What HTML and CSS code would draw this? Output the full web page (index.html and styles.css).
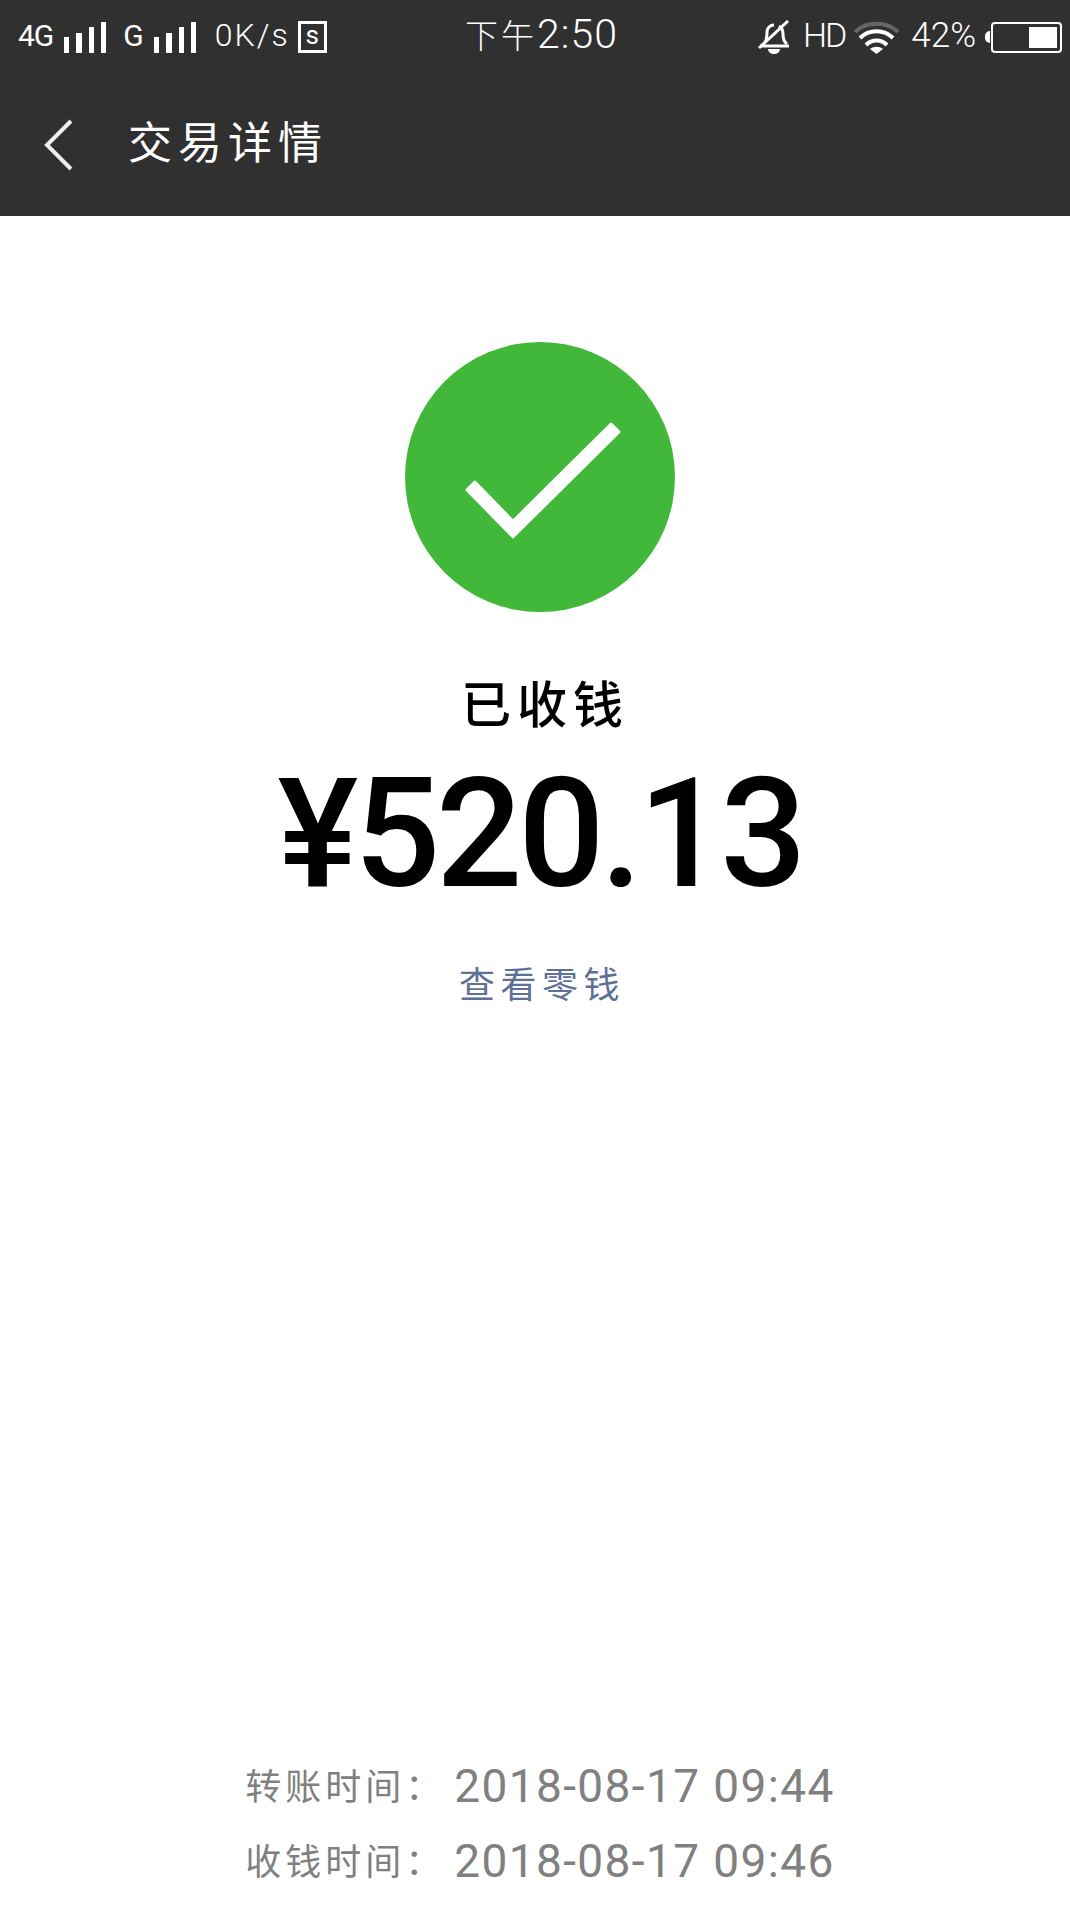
FILE: index.html
```html
<!DOCTYPE html>
<html lang="zh-CN">
<head>
    <meta charset="UTF-8">
    <meta name="viewport" content="width=device-width, initial-scale=1.0">
    <title>交易详情</title>
    <link rel="stylesheet" href="styles.css">
</head>
<body>
    <div class="page">
        <header class="header">
            <div class="status-bar">
                <div class="status-left">
                    <span class="net">4G</span>
                    <svg class="signal" viewBox="0 0 42 31"><path d="M0 15h5v16H0zM12 11h6v20h-6zM25 5h5v26h-5zM37 0h5v31h-5z" fill="#fff"/></svg>
                    <span class="net net-g">G</span>
                    <svg class="signal" viewBox="0 0 42 31"><path d="M0 15h5v16H0zM12 11h6v20h-6zM25 5h5v26h-5zM37 0h5v31h-5z" fill="#fff"/></svg>
                    <span class="speed">0K/s</span>
                    <span class="sim">s</span>
                </div>
                <div class="clock"><span class="clock-cn">下午</span>2:50</div>
                <div class="status-right">
                    <svg class="bell" viewBox="0 0 33 34" fill="none" stroke="#fff">
                        <path d="M7 22c2-3 2-6 2-10 0-4 3-7 7-7M21 6c3 2 4 5 4 8 0 4 1 8 4 10" stroke-width="3"/>
                        <path d="M2 26h29" stroke-width="3"/>
                        <path d="M10 29h12c0 3-3 5-6 5s-6-2-6-5z" fill="#fff" stroke="none"/>
                        <path d="M1 28L30 1" stroke-width="3"/>
                    </svg>
                    <span class="hd">HD</span>
                    <svg class="wifi" viewBox="0 0 45 33" fill="none" stroke-width="4">
                        <path d="M1 11C12 0 33 0 44 11" stroke="#666"/>
                        <path d="M6 17C15 8 30 8 39 17" stroke="#fff"/>
                        <path d="M12 24C18 18 27 18 33 24" stroke="#fff"/>
                        <path d="M16 28c4-3 9-3 13 0l-6.500 5z" fill="#fff" stroke="none"/>
                    </svg>
                    <span class="percent">42%</span>
                    <div class="battery-nub"></div>
                    <div class="battery"><div class="battery-fill"></div></div>
                </div>
            </div>
            <div class="title-bar">
                <svg class="back" viewBox="0 0 30 52" fill="none"><path d="M27 2L3 26l24 24" stroke="#eee" stroke-width="4"/></svg>
                <h1 class="title">交易详情</h1>
            </div>
        </header>
        <main class="content">
            <svg class="success" viewBox="0 0 270 270">
                <circle cx="135" cy="135" r="135" fill="#41b83a"/>
                <path d="M69.900 140.100L108 179.200l98.100-97.100 7.800 7.800L108 194.800 62.100 147.900z" fill="#fff" stroke="#fff" stroke-width="3" stroke-linejoin="round"/>
            </svg>
            <div class="state">已收钱</div>
            <div class="amount">¥520.13</div>
            <a class="link">查看零钱</a>
            <div class="times">
                <div class="time-row"><span class="time-label">转账时间：</span><span class="time-value">2018-08-17 09:44</span></div>
                <div class="time-row"><span class="time-label">收钱时间：</span><span class="time-value">2018-08-17 09:46</span></div>
            </div>
        </main>
    </div>
</body>
</html>
```

FILE: styles.css
```css
* {
    margin: 0;
    padding: 0;
    box-sizing: border-box;
}
body {
    background-color: #fff;
    font-family: Roboto, "Noto Sans CJK SC", sans-serif;
}
.page {
    display: flex;
    flex-direction: column;
    height: 1911px;
    overflow: hidden;
}
.header {
    height: 216px;
    background-color: #303030;
    color: #fff;
}
.status-bar {
    display: grid;
    grid-template-columns: 1fr auto 1fr;
    align-items: center;
    height: 74px;
    padding: 0 8px 0 18px;
}
.status-left,
.status-right {
    display: flex;
    align-items: center;
}
.status-right {
    justify-content: flex-end;
}
.net {
    margin-bottom: 4px;
    font-size: 30px;
    letter-spacing: -1px;
}
.net-g {
    margin-left: 17px;
}
.signal {
    width: 42px;
    height: 31px;
    margin-left: 11px;
}
.speed {
    margin-left: 19px;
    margin-bottom: 4px;
    font-size: 32px;
    font-weight: 300;
    letter-spacing: 2px;
}
.sim {
    width: 29px;
    height: 32px;
    margin-left: 8px;
    border: 3px solid #fff;
    font-size: 26px;
    line-height: 22px;
    text-align: center;
}
.clock {
    margin-left: 3px;
    margin-bottom: 6px;
    font-size: 41px;
    font-weight: 300;
    letter-spacing: 1px;
}
.clock-cn {
    font-size: 33px;
    letter-spacing: 3px;
}
.bell {
    width: 33px;
    height: 34px;
}
.hd {
    margin-left: 12px;
    margin-bottom: 4px;
    font-size: 34px;
    font-weight: 300;
    letter-spacing: -2px;
}
.wifi {
    width: 45px;
    height: 33px;
    margin-left: 9px;
}
.percent {
    margin-left: 12px;
    margin-bottom: 4px;
    font-size: 35px;
    font-weight: 300;
}
.battery-nub {
    width: 5px;
    height: 12px;
    margin-left: 9px;
    background-color: #fff;
    border-radius: 5px 0 0 5px;
}
.battery {
    display: flex;
    justify-content: flex-end;
    width: 71px;
    height: 31px;
    margin-left: 1px;
    padding: 3px;
    border: 2px solid #fff;
    border-radius: 4px;
}
.battery-fill {
    width: 28px;
    background-color: #fff;
}
.title-bar {
    display: flex;
    align-items: center;
    height: 142px;
    padding-left: 44px;
}
.back {
    width: 30px;
    height: 52px;
}
.title {
    margin-left: 54px;
    margin-bottom: 10px;
    font-size: 44px;
    font-weight: 400;
    letter-spacing: 6px;
}
.content {
    flex: 1;
    display: flex;
    flex-direction: column;
    align-items: center;
    padding-left: 10px;
}
.success {
    width: 270px;
    height: 270px;
    margin-top: 126px;
}
.state {
    margin-top: 59px;
    padding-left: 10px;
    font-size: 50px;
    font-weight: 500;
    line-height: 70px;
    letter-spacing: 6px;
    color: #000;
}
.amount {
    margin-top: -1px;
    font-size: 152px;
    font-weight: 500;
    line-height: 188px;
    letter-spacing: -4.300px;
    color: #000;
}
.link {
    margin-top: 33px;
    padding-left: 4px;
    font-size: 36px;
    line-height: 50px;
    letter-spacing: 5.500px;
    color: #5d7198;
}
.times {
    margin-top: auto;
    padding-bottom: 13px;
}
.time-row {
    display: flex;
    align-items: center;
    height: 75px;
    color: #808080;
}
.time-label {
    width: 209px;
    margin-bottom: 4px;
    font-size: 36px;
    letter-spacing: 4px;
}
.time-value {
    font-size: 46px;
    letter-spacing: 1.400px;
}
```
